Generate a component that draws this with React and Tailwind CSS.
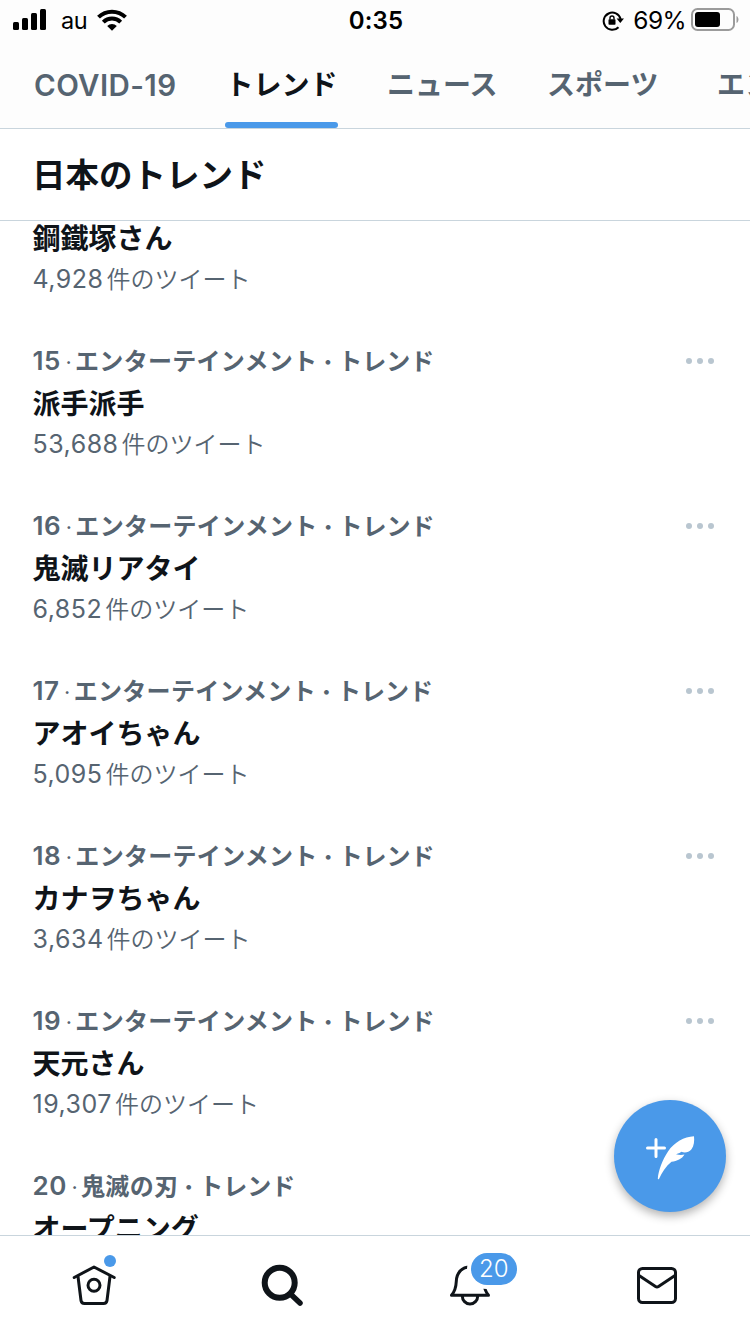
const trends = [
  { rank: "15", category: "エンターテインメント", name: "派手派手", count: "53,688" },
  { rank: "16", category: "エンターテインメント", name: "鬼滅リアタイ", count: "6,852" },
  { rank: "17", category: "エンターテインメント", name: "アオイちゃん", count: "5,095" },
  { rank: "18", category: "エンターテインメント", name: "カナヲちゃん", count: "3,634" },
  { rank: "19", category: "エンターテインメント", name: "天元さん", count: "19,307" },
  { rank: "20", category: "鬼滅の刃", name: "オープニング", count: "" },
];

function StatusBar() {
  return (
    <div className="flex h-10 items-center pl-[13px] pr-[11px] text-black">
      <div className="flex flex-1 items-center">
        <svg className="h-[22px] w-[34px]" viewBox="0 0 34 22" fill="currentColor">
          <rect x="0" y="13" width="6" height="8" rx="1.5" />
          <rect x="9" y="9" width="6" height="12" rx="1.5" />
          <rect x="18" y="4" width="6" height="17" rx="1.5" />
          <rect x="27" y="0" width="6" height="21" rx="1.5" />
        </svg>
        <span className="ml-[14px] h-10 text-[23.5px] leading-[42px] tracking-[-0.4px]">au</span>
        <svg className="ml-[10px] h-[22px] w-[30px]" viewBox="0 0 30 22" fill="none" stroke="currentColor" strokeWidth="4">
          <path d="M1.5 8.2a19.2 19.2 0 0 1 27 0" />
          <path d="M6.3 13.1a12.4 12.4 0 0 1 17.4 0" />
          <path d="M15 21.8l-4.8-4.9a6.8 6.8 0 0 1 9.6 0z" fill="currentColor" stroke="none" />
        </svg>
      </div>
      <span className="h-10 text-[24px] font-semibold leading-[42px] tracking-[0.2px]">0:35</span>
      <div className="flex flex-1 items-center justify-end">
        <svg className="h-[22px] w-[22px]" viewBox="0 0 22 22" fill="none" stroke="currentColor" strokeWidth="2">
          <path d="M16.5 18.2A8.6 8.6 0 1 1 18.6 10" />
          <path d="M14.6 9.6h7.4l-3.7 4.500z" fill="currentColor" stroke="none" />
          <rect x="6.5" y="10.3" width="7" height="5.4" rx="0.8" fill="currentColor" stroke="none" />
          <path d="M8 10.5V9a2 2 0 0 1 4 0v1.5" strokeWidth="1.4" />
        </svg>
        <span className="ml-[9px] h-10 text-[24.5px] leading-[41px] tracking-[-0.6px]">69%</span>
        <svg className="ml-[5px] h-6 w-[48px]" viewBox="0 0 48 24" fill="none">
          <rect x="1" y="1" width="42" height="21" rx="5.5" stroke="#9b9b9b" strokeWidth="2" />
          <rect x="4" y="4" width="25" height="15" rx="3" fill="#000" />
          <path d="M45.5 8c2.6 1 2.6 6 0 7z" fill="#9b9b9b" />
        </svg>
      </div>
    </div>
  );
}

function Tabs() {
  return (
    <div className="flex h-[88px] items-stretch overflow-hidden whitespace-nowrap pl-[34px] text-[28px] font-bold leading-[91px] text-[#566471]">
      <div className="w-[191px] shrink-0 text-[29.5px] font-semibold leading-[90px] tracking-[0.4px]">COVID-19</div>
      <div className="mr-[49px] flex w-[113px] shrink-0 flex-col items-center text-[#0f1419]">
        <span className="h-[82px]">トレンド</span>
        <span className="h-[6px] w-full rounded-full bg-[#4a99e9]" />
      </div>
      <div className="w-[160px] shrink-0">ニュース</div>
      <div className="w-[170px] shrink-0">スポーツ</div>
      <div className="shrink-0">エンタメ</div>
    </div>
  );
}

function TrendItem({ trend }) {
  return (
    <div className="flex h-[165px] shrink-0 justify-between pl-[32.5px] pr-9">
      <div className="whitespace-nowrap">
        <div className="flex h-10 items-center pt-[2px] font-bold text-[#566471]">
          <span className="mb-[3px] text-[26px] font-semibold tracking-[0.6px]">{trend.rank}</span>
          <span className="w-[14px] pl-[1px] text-center text-[18px] font-semibold">·</span>
          <span className="text-[24px] tracking-[0.3px]">{trend.category}</span>
          <span className="w-[21px] text-center text-[28px]">·</span>
          <span className="text-[24px]">トレンド</span>
        </div>
        <TrendName name={trend.name} />
        {trend.count && <TweetCount count={trend.count} />}
      </div>
      <div className="flex h-10 items-center gap-[5px]">
        <span className="size-[6px] rounded-full bg-[#b9c6d0]" />
        <span className="size-[6px] rounded-full bg-[#b9c6d0]" />
        <span className="size-[6px] rounded-full bg-[#b9c6d0]" />
      </div>
    </div>
  );
}

function TrendName({ name }) {
  return <div className="h-[46px] text-[28px] font-bold leading-[47px] text-[#0f1419]">{name}</div>;
}

function TweetCount({ count }) {
  return (
    <div className="flex h-[34px] items-center pt-[2px] text-[#566471]">
      <span className="text-[25px] tracking-[0.5px]">{count}</span>
      <span className="ml-[3px] text-[24px] font-[350]">件のツイート</span>
    </div>
  );
}

function ComposeButton() {
  return (
    <button className="absolute right-6 top-[1100px] flex size-28 items-center justify-center rounded-full bg-[#4a99e9] shadow-[0_4px_10px_rgba(0,0,0,0.3)]">
      <svg className="size-28" viewBox="0 0 112 112">
        <path d="M42 39.5v17M33.5 48h17" stroke="#fff" strokeWidth="3" strokeLinecap="round" />
        <path
          d="M80 36.3C70 37 60.500 42 54 51.500C48.500 60 44.500 70 43.800 78.500c0 1 .9 1 1.300.2C48 72.500 52 66 57.500 61.800C63 61 68 59 70.500 54.500C67.500 55.300 65 55 62 54.200C65 53.500 66.500 52.300 67.500 51.800C70 52.900 74.500 53 77.500 49.300C80 46 80.500 41 80 36.300z"
          fill="#fff"
        />
      </svg>
    </button>
  );
}

function BottomNav() {
  return (
    <nav className="grid h-[99px] shrink-0 grid-cols-4 border-t border-[#c9d5dd] bg-white pt-[25px] text-[#0f1419]">
      <div className="relative mx-auto size-12">
        <svg className="size-12" viewBox="0 0 48 48" fill="none" stroke="currentColor" strokeWidth="3" strokeLinecap="round" strokeLinejoin="round">
          <path d="M4.2 16.5L24 6l20.2 10.5" />
          <path d="M8 15.5l3 24q.4 2.9 3.5 2.9h19q3.1 0 3.5-2.9l3-24" />
          <circle cx="24" cy="24.3" r="6" />
        </svg>
        <span className="absolute -top-[6px] left-[34px] size-3 rounded-full bg-[#4a99e9]" />
      </div>
      <div className="mx-auto size-12">
        <svg className="size-12" viewBox="0 0 48 48" fill="none" stroke="currentColor" strokeLinecap="round">
          <circle cx="22.7" cy="21.7" r="15" strokeWidth="6" />
          <path d="M33.5 33l9.5 9" strokeWidth="5.5" />
        </svg>
      </div>
      <div className="relative mx-auto size-12">
        <svg className="size-12" viewBox="0 0 48 48" fill="none" stroke="currentColor" strokeWidth="3" strokeLinejoin="round">
          <path d="M6.5 34.3h37c-3.5-4-4.5-7-4.8-14C38.4 11.5 33 6 25 6S11.6 11.5 11.3 20.3c-.3 7-1.3 10-4.8 14z" />
          <path d="M17.3 35a7.7 8 0 0 0 15.4 0" />
        </svg>
        <span className="absolute -top-[8px] left-[26px] h-8 w-[46px] rounded-full bg-[#4a99e9] text-center text-[24px] font-[350] leading-[32px] text-white ring-4 ring-white">
          20
        </span>
      </div>
      <div className="mx-auto size-12">
        <svg className="size-12" viewBox="0 0 48 48" fill="none" stroke="currentColor" strokeWidth="3" strokeLinejoin="round">
          <rect x="6.5" y="7.5" width="37" height="34" rx="4" />
          <path d="M7 14.5l16.5 11q1.5 1 3 0L43 14.5" />
        </svg>
      </div>
    </nav>
  );
}

export default function App() {
  return (
    <div className="relative flex h-[1334px] w-[750px] flex-col overflow-hidden bg-white font-['Inter','Noto_Sans_CJK_JP',sans-serif]">
      <header className="h-[129px] shrink-0 border-b border-[#c9d5dd] bg-[#fdfdfd]">
        <StatusBar />
        <Tabs />
      </header>
      <h1 className="h-[92px] shrink-0 border-b border-[#c9d5dd] pl-8 text-[33.5px] font-bold leading-[93px] text-[#0f1419]">
        日本のトレンド
      </h1>
      <main className="flex min-h-0 flex-1 flex-col overflow-hidden">
        <div className="-mt-[5px] h-[125px] shrink-0 pl-[32.5px]">
          <TrendName name="鋼鐵塚さん" />
          <TweetCount count="4,928" />
        </div>
        {trends.map((trend) => (
          <TrendItem key={trend.rank} trend={trend} />
        ))}
      </main>
      <BottomNav />
      <ComposeButton />
    </div>
  );
}
